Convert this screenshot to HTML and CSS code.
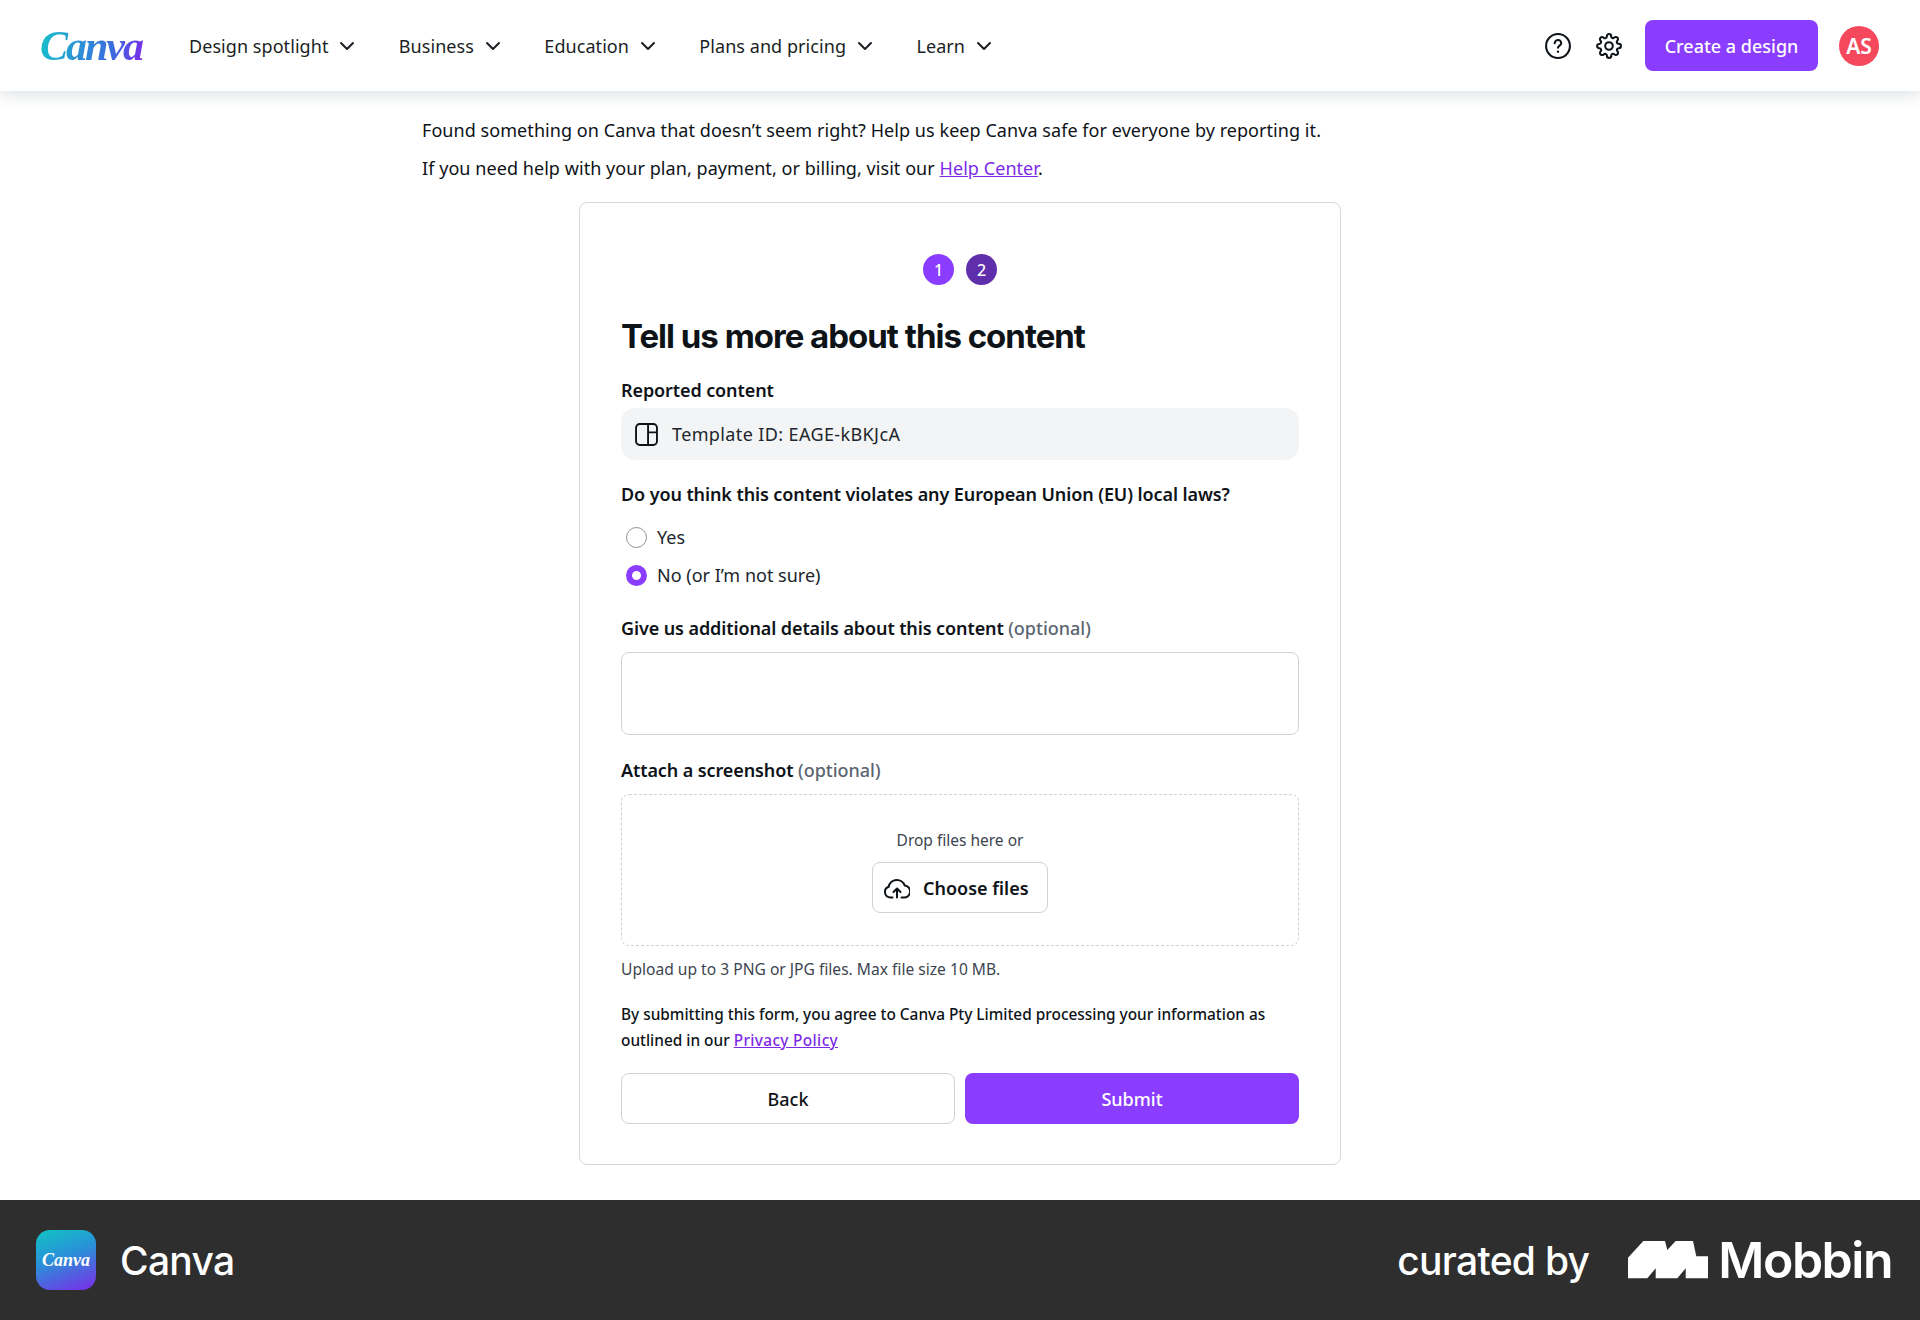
FILE: index.html
```html
<!DOCTYPE html>
<html lang="en">
<head>
    <meta charset="UTF-8">
    <title>Report content - Canva</title>
    <link rel="stylesheet" href="styles.css">
</head>
<body>

    <header class="topbar">
        <div class="brand">Canva</div>
        <nav class="nav">
            <a class="nav-item">Design spotlight <svg class="chev" viewBox="0 0 16 10"><path d="M2 2l6 6 6-6"/></svg></a>
            <a class="nav-item">Business <svg class="chev" viewBox="0 0 16 10"><path d="M2 2l6 6 6-6"/></svg></a>
            <a class="nav-item">Education <svg class="chev" viewBox="0 0 16 10"><path d="M2 2l6 6 6-6"/></svg></a>
            <a class="nav-item">Plans and pricing <svg class="chev" viewBox="0 0 16 10"><path d="M2 2l6 6 6-6"/></svg></a>
            <a class="nav-item">Learn <svg class="chev" viewBox="0 0 16 10"><path d="M2 2l6 6 6-6"/></svg></a>
        </nav>
        <div class="top-actions">
            <svg class="top-icon" viewBox="0 0 24 24"><circle cx="12" cy="12" r="11"/><path d="M9 9.4a3 3 0 0 1 6 .1c0 2-3 2.300-3 4.200"/><circle class="dot" cx="12" cy="17.200" r="1.100"/></svg>
            <svg class="top-icon" viewBox="0 0 24 24"><circle cx="12" cy="12" r="3.500"/><path d="M19.400 15a1.650 1.650 0 0 0 .33 1.820l.06.06a2 2 0 0 1 0 2.830 2 2 0 0 1-2.830 0l-.06-.06a1.650 1.650 0 0 0-1.820-.33 1.650 1.650 0 0 0-1 1.510V21a2 2 0 0 1-2 2 2 2 0 0 1-2-2v-.09A1.650 1.650 0 0 0 9 19.400a1.650 1.650 0 0 0-1.820.33l-.06.06a2 2 0 0 1-2.830 0 2 2 0 0 1 0-2.830l.06-.06a1.650 1.650 0 0 0 .33-1.820 1.650 1.650 0 0 0-1.510-1H3a2 2 0 0 1-2-2 2 2 0 0 1 2-2h.09A1.650 1.650 0 0 0 4.600 9a1.650 1.650 0 0 0-.33-1.820l-.06-.06a2 2 0 0 1 0-2.830 2 2 0 0 1 2.830 0l.06.06a1.650 1.650 0 0 0 1.820.33H9a1.650 1.650 0 0 0 1-1.510V3a2 2 0 0 1 2-2 2 2 0 0 1 2 2v.09a1.650 1.650 0 0 0 1 1.510 1.650 1.650 0 0 0 1.820-.33l.06-.06a2 2 0 0 1 2.830 0 2 2 0 0 1 0 2.830l-.06.06a1.650 1.650 0 0 0-.33 1.820V9a1.650 1.650 0 0 0 1.510 1H21a2 2 0 0 1 2 2 2 2 0 0 1-2 2h-.09a1.650 1.650 0 0 0-1.510 1z"/></svg>
            <button type="button" class="btn-create">Create a design</button>
            <span class="avatar">AS</span>
        </div>
    </header>

    <main class="main">
        <div class="intro">
            <p>Found something on Canva that doesn’t seem right? Help us keep Canva safe for everyone by reporting it.</p>
            <p>If you need help with your plan, payment, or billing, visit our <a href="#">Help Center</a>.</p>
        </div>

        <section class="card">
            <div class="steps">
                <span class="step">1</span>
                <span class="step step-current">2</span>
            </div>
            <h1>Tell us more about this content</h1>

            <div class="label label-first">Reported content</div>
            <div class="reported">
                <svg class="layout-icon" viewBox="0 0 22 22"><rect x="1" y="1" width="20" height="20" rx="3.500"/><path d="M12.500 1v20M12.500 9H21"/></svg>
                Template ID: EAGE-kBKJcA
            </div>

            <div class="label label-question">Do you think this content violates any European Union (EU) local laws?</div>
            <div class="radios">
                <div class="radio-row"><span class="radio"></span>Yes</div>
                <div class="radio-row"><span class="radio radio-on"></span>No (or I’m not sure)</div>
            </div>

            <div class="label label-details">Give us additional details about this content <span class="optional">(optional)</span></div>
            <div class="textarea"></div>

            <div class="label label-attach">Attach a screenshot <span class="optional">(optional)</span></div>
            <div class="dropzone">
                <div class="drop-text">Drop files here or</div>
                <button type="button" class="btn-choose">
                    <svg class="cloud" viewBox="0 0 26 23"><path d="M8.500 21.500H6.500a5.500 5.500 0 0 1-1.800-10.700 8.300 8.300 0 0 1 16-1.300 6 6 0 0 1-1.200 12H17.500"/><path d="M13 21.500V13M9.500 16l3.500-3.500 3.500 3.500"/></svg>
                    Choose files
                </button>
            </div>
            <div class="hint">Upload up to 3 PNG or JPG files. Max file size 10 MB.</div>

            <p class="legal">By submitting this form, you agree to Canva Pty Limited processing your information as outlined in our <a href="#">Privacy Policy</a></p>

            <div class="form-buttons">
                <button type="button" class="btn-back">Back</button>
                <button type="button" class="btn-submit">Submit</button>
            </div>
        </section>
    </main>

    <footer class="footer">
        <div class="footer-app">
            <div class="app-icon">Canva</div>
            <span class="app-name">Canva</span>
        </div>
        <div class="footer-credit">
            <span class="curated">curated by</span>
            <svg class="mobbin-mark" viewBox="0 0 80 38"><path d="M0 16.700L15.300 0H37l2.300 9L47.700 0H65l3.300 15.300H80V37.300H57.700v-10l-8.400 10H27.700v-10l-8.400 10H0z"/></svg>
            <span class="mobbin-name">Mobbin</span>
        </div>
    </footer>

</body>
</html>
```

FILE: styles.css
```css
* {
    box-sizing: border-box;
}

body {
    margin: 0;
    background-color: #ffffff;
    color: #0e1318;
    font-family: "Noto Sans", Arial, sans-serif;
    font-size: 18px;
}

a {
    color: #7d2ae8;
    text-decoration: underline;
}

button {
    font-family: inherit;
    cursor: pointer;
}

/* Top bar */
.topbar {
    height: 91px;
    padding: 0 40px;
    display: flex;
    align-items: center;
    background-color: #fff;
    box-shadow: 0 2px 16px rgba(64, 87, 109, 0.22);
    position: relative;
}

.brand {
    width: 149px;
    font-family: "Liberation Serif", serif;
    font-style: italic;
    font-weight: 700;
    font-size: 42px;
    letter-spacing: -2px;
    background: linear-gradient(100deg, #16c2c9 0%, #3d6ae0 50%, #7d2ae8 70%);
    -webkit-background-clip: text;
    background-clip: text;
    color: transparent;
}

.nav {
    display: flex;
    gap: 43.4px;
}

.nav-item {
    display: flex;
    align-items: center;
    gap: 11px;
    color: #1b1f24;
    text-decoration: none;
    font-size: 18px;
    letter-spacing: 0.06px;
}

.chev {
    width: 16px;
    height: 10px;
    fill: none;
    stroke: #1b1f24;
    stroke-width: 2;
    stroke-linecap: round;
    stroke-linejoin: round;
}

.top-actions {
    margin-left: auto;
    display: flex;
    align-items: center;
}

.top-icon {
    width: 26px;
    height: 26px;
    margin-right: 25px;
    fill: none;
    stroke: #0e1318;
    stroke-width: 1.9;
    stroke-linecap: round;
}

.top-icon:nth-child(2) {
    margin-right: 23px;
}

.top-icon .dot {
    fill: #0e1318;
    stroke: none;
}

.btn-create {
    width: 173px;
    height: 51px;
    border: none;
    border-radius: 8px;
    background-color: #8b3dff;
    color: #fff;
    font-size: 18px;
    font-weight: 500;
}

.avatar {
    width: 40px;
    height: 40px;
    margin-left: 21px;
    margin-right: 1px;
    border-radius: 50%;
    background-color: #f6485c;
    color: #fff;
    font-size: 21px;
    font-weight: 600;
    display: flex;
    align-items: center;
    justify-content: center;
}

/* Main */
.main {
    padding-top: 20px;
    padding-bottom: 35px;
}

.intro {
    width: 1076px;
    margin: 0 auto;
    line-height: 38px;
    letter-spacing: 0.06px;
}

.intro p {
    margin: 0;
}

.card {
    width: 762px;
    height: 963px;
    margin: 15px auto 0;
    padding: 51px 41px 0;
    border: 1px solid #d5d8dc;
    border-radius: 8px;
}

.steps {
    display: flex;
    justify-content: center;
    gap: 12px;
}

.step {
    width: 31px;
    height: 31px;
    border-radius: 50%;
    background-color: #8b3dff;
    color: #fff;
    font-size: 16px;
    font-weight: 500;
    display: flex;
    align-items: center;
    justify-content: center;
}

.step-current {
    background-color: #5f2eab;
}

h1 {
    margin: 29px 0 0;
    font-family: Inter, sans-serif;
    font-size: 33px;
    line-height: 44px;
    font-weight: 700;
    letter-spacing: -1px;
}

.label {
    font-weight: 600;
    font-size: 18px;
    line-height: 26px;
    letter-spacing: -0.1px;
}

.label-first {
    margin-top: 19px;
}

.optional {
    color: #5c6570;
    font-weight: 500;
    letter-spacing: 0;
}

.reported {
    height: 52px;
    margin-top: 5px;
    padding-left: 14px;
    border-radius: 14px;
    background-color: #f2f4f5;
    display: flex;
    align-items: center;
    gap: 14px;
    color: #20262c;
    letter-spacing: 0.38px;
}

.layout-icon {
    width: 23px;
    height: 23px;
    fill: none;
    stroke: #0e1318;
    stroke-width: 1.8;
}

.label-question {
    margin-top: 21px;
}

.radios {
    margin-top: 11px;
    padding-left: 5px;
}

.radio-row {
    height: 38px;
    display: flex;
    align-items: center;
    gap: 10px;
    color: #20262c;
}

.radio {
    width: 21px;
    height: 21px;
    border: 1.5px solid #8d9198;
    border-radius: 50%;
}

.radio-on {
    border: 6px solid #8b3dff;
}

.label-details {
    margin-top: 21px;
}

.textarea {
    height: 83px;
    margin-top: 11px;
    border: 1px solid #cfd2d6;
    border-radius: 8px;
}

.label-attach {
    margin-top: 22px;
}

.dropzone {
    height: 152px;
    margin-top: 11px;
    padding-top: 33px;
    border: 1px dashed #cfd2d6;
    border-radius: 8px;
    display: flex;
    flex-direction: column;
    align-items: center;
}

.drop-text {
    font-size: 15.5px;
    line-height: 24px;
    color: #3d4550;
}

.btn-choose {
    width: 176px;
    height: 51px;
    margin-top: 10px;
    padding-left: 11px;
    border: 1px solid #cfd2d6;
    border-radius: 8px;
    background-color: #fff;
    color: #0e1318;
    font-size: 18px;
    font-weight: 600;
    display: flex;
    align-items: center;
    gap: 13px;
}

.cloud {
    width: 26px;
    height: 23px;
    fill: none;
    stroke: #0e1318;
    stroke-width: 2;
    stroke-linecap: round;
    stroke-linejoin: round;
}

.hint {
    margin-top: 11px;
    font-size: 15.6px;
    line-height: 24px;
    color: #3d4550;
}

.legal {
    margin: 21px 0 0;
    font-size: 15.4px;
    line-height: 26px;
    font-weight: 500;
}

.legal a {
    letter-spacing: 0.35px;
}

.form-buttons {
    margin-top: 19px;
    display: grid;
    grid-template-columns: 1fr 1fr;
    gap: 10px;
}

.btn-back,
.btn-submit {
    height: 51px;
    border-radius: 8px;
    font-size: 18px;
    font-weight: 500;
}

.btn-back {
    border: 1px solid #cfd2d6;
    background-color: #fff;
    color: #0e1318;
}

.btn-submit {
    border: none;
    background-color: #8b3dff;
    color: #fff;
}

/* Footer */
.footer {
    height: 120px;
    padding: 0 28px 0 36px;
    display: flex;
    align-items: center;
    justify-content: space-between;
    background-color: #2e2e2e;
    color: #fff;
    font-family: Inter, sans-serif;
}

.footer-app {
    display: flex;
    align-items: center;
    gap: 24px;
}

.app-icon {
    width: 60px;
    height: 60px;
    border-radius: 14px;
    background: linear-gradient(160deg, #10c4c4 0%, #2a8fd8 45%, #7d2ae8 100%);
    font-family: "Liberation Serif", serif;
    font-style: italic;
    font-weight: 700;
    font-size: 18px;
    display: flex;
    align-items: center;
    justify-content: center;
}

.app-name {
    font-size: 39px;
    font-weight: 500;
    letter-spacing: -0.7px;
}

.footer-credit {
    display: flex;
    align-items: center;
}

.curated {
    font-size: 39px;
    font-weight: 500;
    letter-spacing: -0.7px;
    margin-right: 38.4px;
}

.mobbin-mark {
    width: 80px;
    height: 38px;
    fill: #fff;
    margin-right: 10.6px;
}

.mobbin-name {
    font-size: 50px;
    font-weight: 600;
    letter-spacing: -1.5px;
}
```
